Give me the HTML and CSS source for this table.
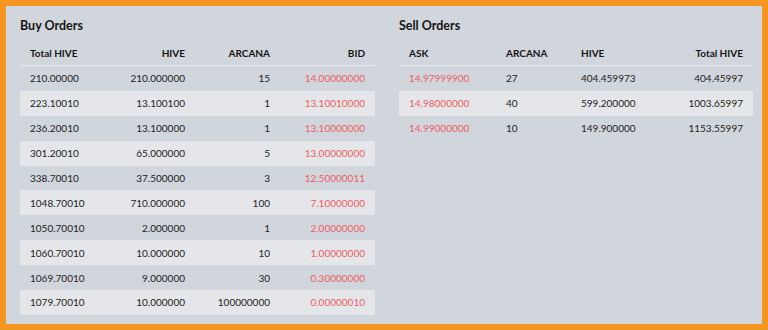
FILE: index.html
```html
<!DOCTYPE html>
<html>
<head>
<meta charset="utf-8">
<link rel="stylesheet" href="styles.css">
</head>
<body>
<div class="panel">
  <section class="book">
    <h2 class="title">Buy Orders</h2>
    <table class="orders buy">
      <colgroup><col class="b1"><col class="b2"><col class="b3"><col class="b4"></colgroup>
      <thead>
        <tr><th class="l">Total HIVE</th><th class="r">HIVE</th><th class="r">ARCANA</th><th class="r">BID</th></tr>
      </thead>
      <tbody>
        <tr><td class="l">210.00000</td><td class="r">210.000000</td><td class="r">15</td><td class="r price">14.00000000</td></tr>
        <tr><td class="l">223.10010</td><td class="r">13.100100</td><td class="r">1</td><td class="r price">13.10010000</td></tr>
        <tr><td class="l">236.20010</td><td class="r">13.100000</td><td class="r">1</td><td class="r price">13.10000000</td></tr>
        <tr><td class="l">301.20010</td><td class="r">65.000000</td><td class="r">5</td><td class="r price">13.00000000</td></tr>
        <tr><td class="l">338.70010</td><td class="r">37.500000</td><td class="r">3</td><td class="r price">12.50000011</td></tr>
        <tr><td class="l">1048.70010</td><td class="r">710.000000</td><td class="r">100</td><td class="r price">7.10000000</td></tr>
        <tr><td class="l">1050.70010</td><td class="r">2.000000</td><td class="r">1</td><td class="r price">2.00000000</td></tr>
        <tr><td class="l">1060.70010</td><td class="r">10.000000</td><td class="r">10</td><td class="r price">1.00000000</td></tr>
        <tr><td class="l">1069.70010</td><td class="r">9.000000</td><td class="r">30</td><td class="r price">0.30000000</td></tr>
        <tr><td class="l">1079.70010</td><td class="r">10.000000</td><td class="r">100000000</td><td class="r price">0.00000010</td></tr>
      </tbody>
    </table>
  </section>
  <section class="book">
    <h2 class="title">Sell Orders</h2>
    <table class="orders sell">
      <colgroup><col class="s1"><col class="s2"><col class="s3"><col class="s4"></colgroup>
      <thead>
        <tr><th class="l">ASK</th><th class="l">ARCANA</th><th class="l">HIVE</th><th class="r">Total HIVE</th></tr>
      </thead>
      <tbody>
        <tr><td class="l price">14.97999900</td><td class="l">27</td><td class="l">404.459973</td><td class="r">404.45997</td></tr>
        <tr><td class="l price">14.98000000</td><td class="l">40</td><td class="l">599.200000</td><td class="r">1003.65997</td></tr>
        <tr><td class="l price">14.99000000</td><td class="l">10</td><td class="l">149.900000</td><td class="r">1153.55997</td></tr>
      </tbody>
    </table>
  </section>
</div>
</body>
</html>
```

FILE: styles.css
```css
html, body {
  margin: 0;
  padding: 0;
  background: #f6951f;
}
body {
  width: 768px;
  height: 330px;
  overflow: hidden;
  font-family: Lato, "Open Sans", sans-serif;
  color: #222222;
}
.panel {
  margin: 6px 6px 0 6px;
  width: 756px;
  height: 318px;
  box-sizing: border-box;
  background: #d1d5dc;
  padding: 11px 9px 0 14px;
  display: grid;
  grid-template-columns: 355px 354px;
  column-gap: 24px;
  align-items: start;
}
.title {
  margin: 0 0 6px 0;
  font-size: 12.5px;
  line-height: 18px;
  font-weight: 700;
  color: #161616;
}
.orders {
  border-collapse: collapse;
  table-layout: fixed;
  width: 100%;
  font-size: 10px;
}
.b1 { width: 90px; }
.b2 { width: 85px; }
.b3 { width: 85px; }
.b4 { width: 95px; }
.s1 { width: 97px; }
.s2 { width: 75px; }
.s3 { width: 90px; }
.s4 { width: 92px; }
.orders th {
  height: 24px;
  padding: 0 10px;
  font-weight: 700;
  color: #161616;
  border-bottom: 1px solid #e9ebef;
  vertical-align: middle;
}
.orders td {
  height: 24.9px;
  padding: 0 10px;
  vertical-align: middle;
  white-space: nowrap;
}
.orders tbody tr:nth-child(even) {
  background: #e4e6ea;
}
.l { text-align: left; }
.r { text-align: right; }
.price { color: #ee5d65; }
```
